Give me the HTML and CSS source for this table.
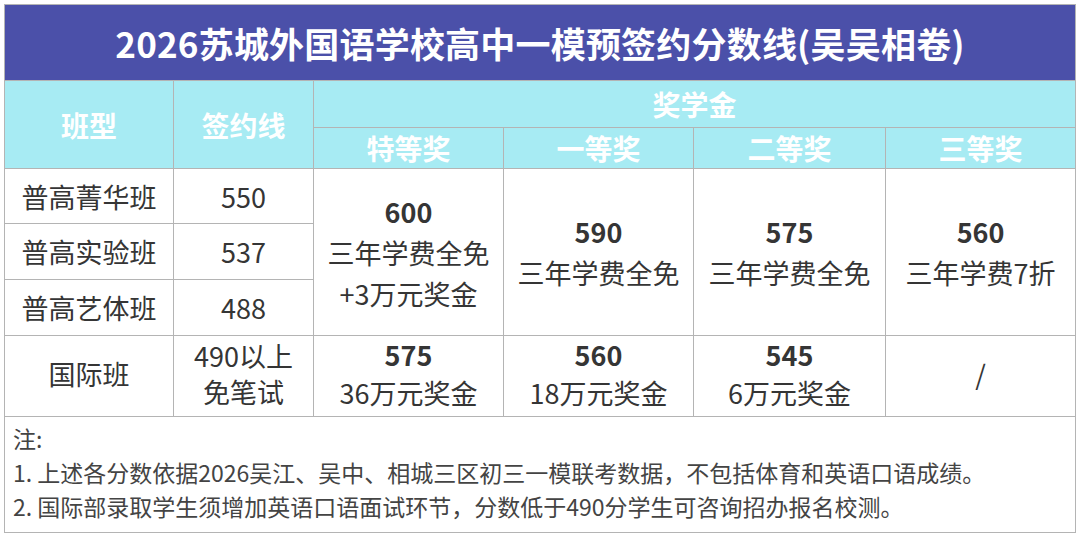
FILE: index.html
```html
<!DOCTYPE html>
<html lang="zh-CN">
<head>
<meta charset="utf-8">
<title>2026苏城外国语学校高中一模预签约分数线</title>
<link rel="stylesheet" href="styles.css">
</head>
<body>
<table class="score">
  <colgroup>
    <col class="c1"><col class="c2"><col class="c3"><col class="c4"><col class="c5"><col class="c6">
  </colgroup>
  <tr class="title-row"><th colspan="6" class="title">2026苏城外国语学校高中一模预签约分数线(吴吴相卷)</th></tr>
  <tr class="head1">
    <th rowspan="2" class="hd">班型</th>
    <th rowspan="2" class="hd">签约线</th>
    <th colspan="4" class="hd">奖学金</th>
  </tr>
  <tr class="head2">
    <th class="hd">特等奖</th><th class="hd">一等奖</th><th class="hd">二等奖</th><th class="hd">三等奖</th>
  </tr>
  <tr class="r1">
    <td>普高菁华班</td><td>550</td>
    <td rowspan="3"><div class="num">600</div><div>三年学费全免</div><div>+3万元奖金</div></td>
    <td rowspan="3"><div class="num">590</div><div>三年学费全免</div></td>
    <td rowspan="3"><div class="num">575</div><div>三年学费全免</div></td>
    <td rowspan="3"><div class="num">560</div><div>三年学费7折</div></td>
  </tr>
  <tr class="r2"><td>普高实验班</td><td>537</td></tr>
  <tr class="r3"><td>普高艺体班</td><td>488</td></tr>
  <tr class="r4">
    <td>国际班</td>
    <td class="tight"><div>490以上</div><div>免笔试</div></td>
    <td><div class="num">575</div><div>36万元奖金</div></td>
    <td><div class="num">560</div><div>18万元奖金</div></td>
    <td><div class="num">545</div><div>6万元奖金</div></td>
    <td>/</td>
  </tr>
  <tr class="notes-row">
    <td colspan="6" class="notes">
      <div>注:</div>
      <div>1. 上述各分数依据2026吴江、吴中、相城三区初三一模联考数据，不包括体育和英语口语成绩。</div>
      <div>2. 国际部录取学生须增加英语口语面试环节，分数低于490分学生可咨询招办报名校测。</div>
    </td>
  </tr>
</table>
</body>
</html>
```
FILE: styles.css
```css
html, body {
  margin: 0;
  padding: 0;
  background: #ffffff;
}
body {
  padding: 4px 0 0 4px;
  font-family: "Noto Sans CJK SC", "Noto Sans", sans-serif;
  color: #353535;
}
.score {
  border-collapse: collapse;
  table-layout: fixed;
  width: 1071px;
  border: 1px solid #b4b4b4;
}
.c1 { width: 169px; }
.c2 { width: 140px; }
.c3 { width: 190px; }
.c4 { width: 190px; }
.c5 { width: 192px; }
.c6 { width: 190px; }

.score th, .score td {
  border: 1px solid #b4b4b4;
  padding: 0;
  text-align: center;
  vertical-align: middle;
}
.title-row { height: 76px; }
.title {
  background: #4b50a9;
  color: #ffffff;
  font-size: 35px;
  font-weight: 700;
  letter-spacing: 0.2px;
}
.hd {
  background: #a7ebf3;
  color: #ffffff;
  font-size: 28px;
  font-weight: 700;
}
.head1 { height: 47px; }
.head2 { height: 40px; }
.score td {
  font-size: 27px;
  line-height: 41px;
}
.r1 { height: 55px; }
.r2 { height: 56px; }
.r3 { height: 56px; }
.r4 { height: 81px; }
.score .r4 td { line-height: 38px; padding-bottom: 4px; }
.num { font-weight: 700; }
.score .r4 td.tight { line-height: 36px; }
.notes-row { height: 116px; }
.score td.notes {
  text-align: left;
  font-size: 23px;
  line-height: 34px;
  padding: 4px 0 0 8px;
  color: #444444;
  vertical-align: top;
}
```
